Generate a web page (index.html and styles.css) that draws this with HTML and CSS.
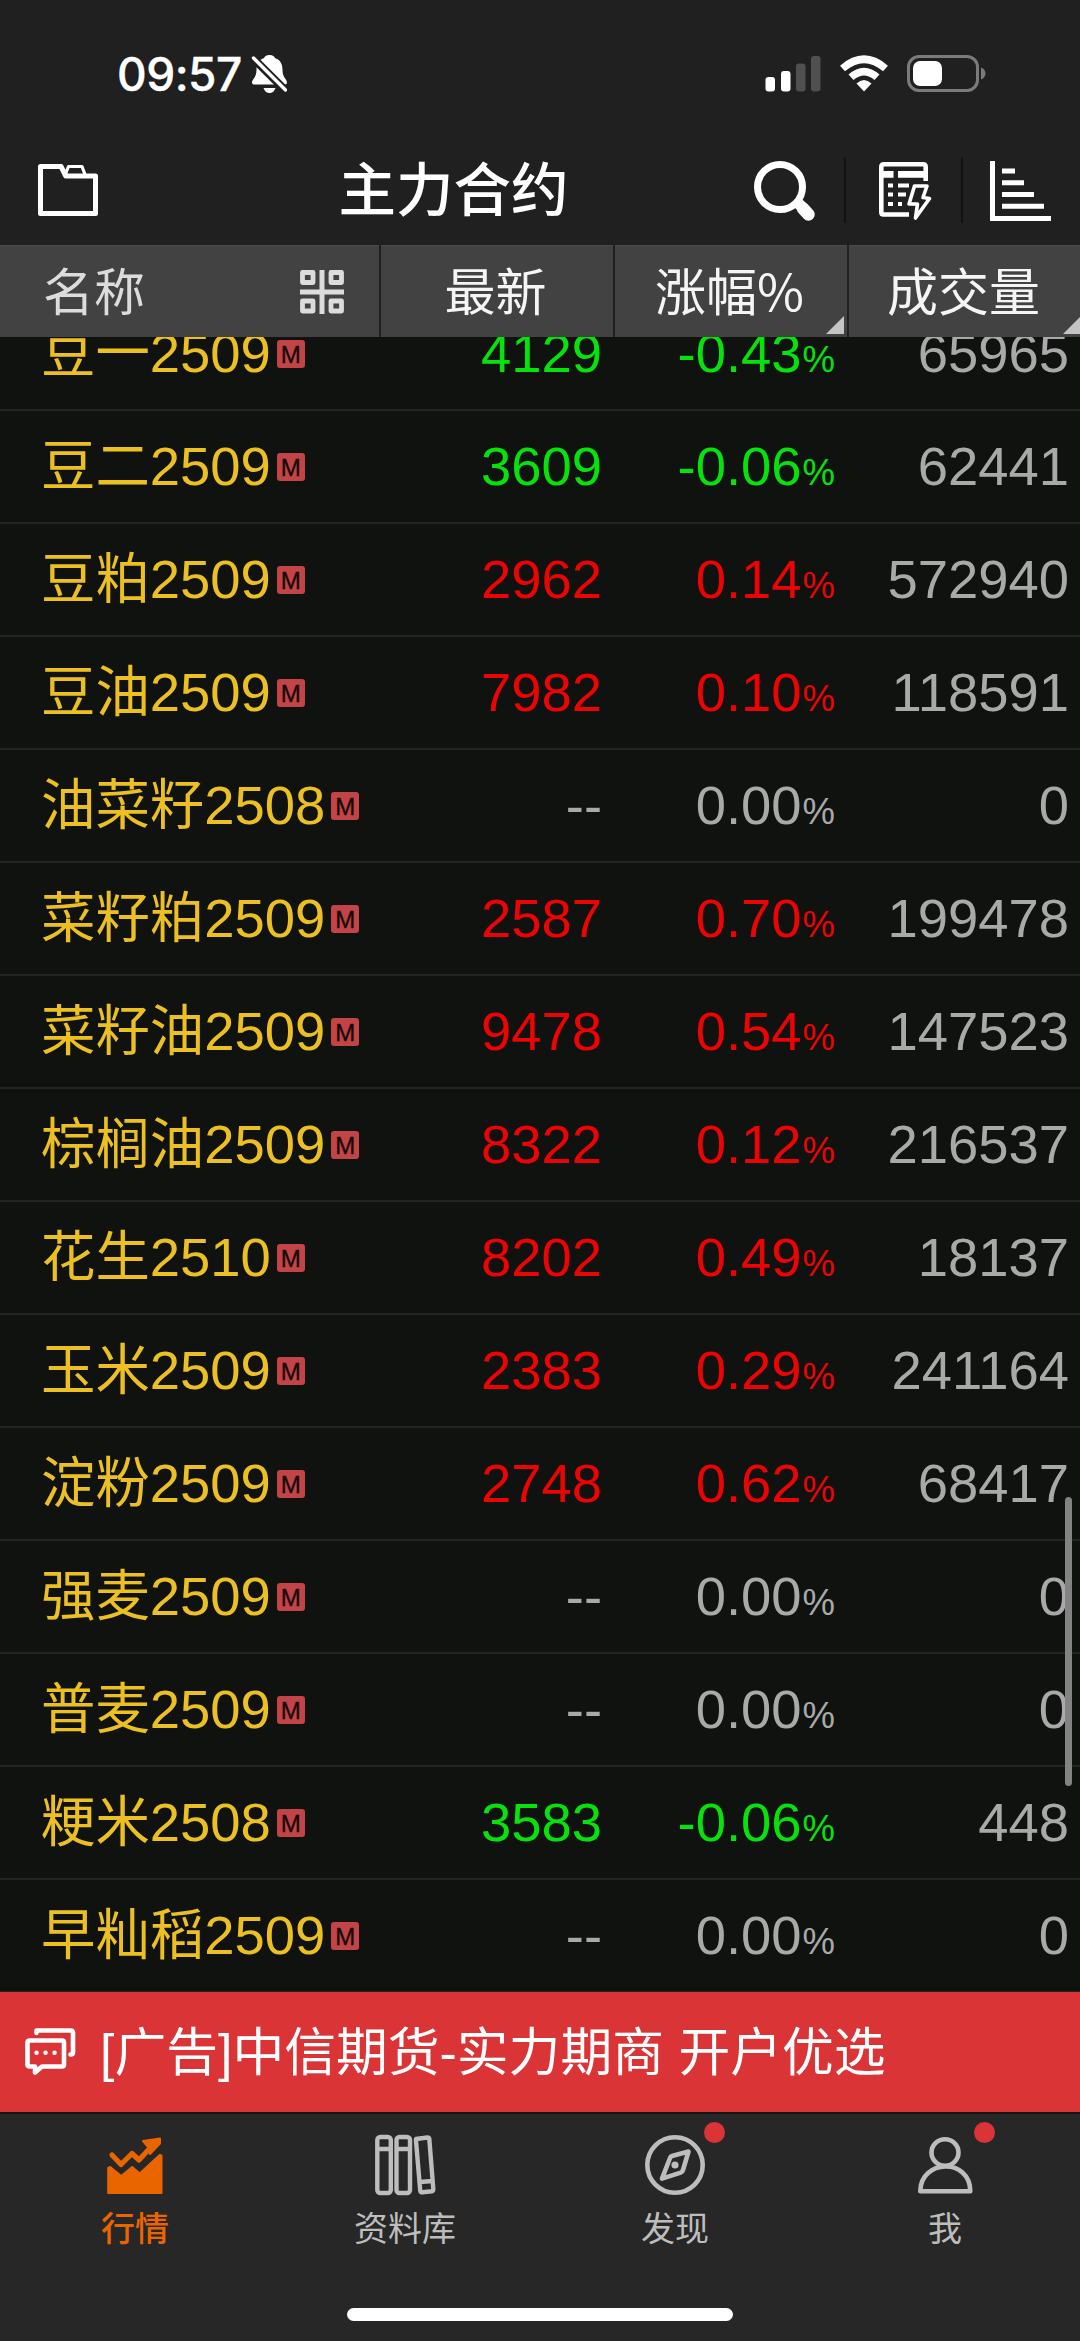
FILE: index.html
```html
<!DOCTYPE html>
<html lang="zh-CN">
<head>
<meta charset="UTF-8">
<title>主力合约</title>
<link rel="stylesheet" href="styles.css">
</head>
<body>
    <header>
        <div class="status">
            <span class="time">09:57</span>
            <svg class="bell" width="36" height="40" viewBox="251 54 36 40">
                <path fill="#fff" d="M269.500 55c3.500 0 5 1.500 5.500 3 6 2 7.500 7 7.500 12 0 8 4.500 9 4.500 12.500 0 1.500-1 2-2.500 2h-30c-1.500 0-2.500-.500-2.500-2 0-3.500 4.500-4.500 4.500-12.500 0-5 1.500-10 7.500-12 .500-1.500 2-3 5.500-3zM263.500 88h12c-1 3-3 5-6 5s-5-2-6-5z"/>
                <path stroke="#202020" stroke-width="8" d="M252 57l35 35"/>
                <path stroke="#fff" stroke-width="3.400" stroke-linecap="round" d="M253.500 58l32 32"/>
            </svg>
            <div class="status-right">
                <svg width="56" height="36" viewBox="766 55 56 36">
                    <g fill="#fff"><rect x="766.500" y="76" width="9.500" height="14.500" rx="3"/><rect x="782" y="70" width="9.500" height="20.500" rx="3"/></g>
                    <g fill="#505050"><rect x="797" y="62.500" width="9.500" height="28" rx="3"/><rect x="812" y="55" width="9.500" height="35.500" rx="3"/></g>
                </svg>
                <svg width="50" height="37" viewBox="839 54 50 37">
                    <path fill="none" stroke="#fff" stroke-width="7.500" d="M842.500 67.500q21.500-18.500 43 0M851 76.300q13-11.500 26 0"/>
                    <path fill="#fff" d="M864 90.500l-7.500-8q7.500-7 15 0z"/>
                </svg>
                <svg width="80" height="38" viewBox="907 54 80 38">
                    <rect x="908.500" y="55.500" width="69" height="34" rx="10.500" fill="none" stroke="#7b7b7b" stroke-width="3"/>
                    <rect x="913" y="60" width="29" height="25" rx="7" fill="#fff"/>
                    <path fill="#7b7b7b" d="M981 66.500c6 2 6 10 0 12z"/>
                </svg>
            </div>
        </div>
        <div class="titlebar">
            <svg class="folder" width="62" height="54" viewBox="37 163 62 54" fill="none" stroke="#fff" stroke-linejoin="round">
                <path stroke-width="5" d="M40.500 166.500h20.500l4.800 9.500h29.700v37.500h-55z"/>
                <path stroke-width="3.200" d="M65.500 174l3-7.500h13.500l3 8"/>
            </svg>
            <h1>主力合约</h1>
            <div class="tools">
                <svg width="64" height="64" viewBox="752 157 64 64" fill="none" stroke="#fff">
                    <circle cx="780" cy="186" r="22.500" stroke-width="7"/>
                    <path stroke-width="12.500" stroke-linecap="round" d="M803 207.500l5.500 6"/>
                    <path stroke-width="11" d="M797 201l8 8"/>
                </svg>
                <i class="sep"></i>
                <svg width="56" height="64" viewBox="876 157 56 64" fill="none" stroke="#fff">
                    <path stroke-width="4.600" stroke-linejoin="round" d="M908 213.500h-25.500q-2.200 0-2.200-2.200v-45.300q0-2.700 2.700-2.700h39q2.700 0 2.700 2.700v14"/>
                    <path stroke-width="6.600" d="M881 173.400h11.500M897 173.400h27"/>
                    <path stroke-width="4" d="M887 184.500h5M887 193.500h5M887 203h5M897 184.500h11M897 193.500h8M897 203h4"/>
                    <path stroke-width="3.600" stroke-linejoin="round" d="M913.500 185h12.500l-4 11.500 6.500 1-14 19.500 2-14h-8.500z"/>
                </svg>
                <i class="sep"></i>
                <svg class="chart" width="62" height="64" viewBox="990 157 62 64" fill="none" stroke="#fff" stroke-width="5">
                    <path d="M992.500 160v57.500h58.500"/>
                    <path d="M1002 170h13M1002 181.700h22M1002 193.500h32M1002 205.300h42"/>
                </svg>
            </div>
        </div>
    </header>

    <div class="thead">
        <div class="th th-name">
            <span>名称</span>
            <svg width="44" height="44" viewBox="0 0 44 44" fill="none" stroke="#dcdcdc" stroke-width="5">
                <path d="M22 0v44M0 22h44"/>
                <g stroke-width="4.800" stroke-linejoin="round"><path d="M2.500 2.500h10.500v10h-10.500zM31 2.500h10.500v10h-10.500zM2.500 31h10.500v10h-10.500zM31 31h10.500v10h-10.500z"/></g>
            </svg>
        </div>
        <div class="th"><span>最新</span></div>
        <div class="th sort"><span>涨幅%</span></div>
        <div class="th sort"><span>成交量</span></div>
    </div>

    <div class="list">
        <div class="row down"><span class="name">豆一2509<b>M</b></span><span>4129</span><span>-0.43<small>%</small></span><span class="vol">65965</span></div>
        <div class="row down"><span class="name">豆二2509<b>M</b></span><span>3609</span><span>-0.06<small>%</small></span><span class="vol">62441</span></div>
        <div class="row up"><span class="name">豆粕2509<b>M</b></span><span>2962</span><span>0.14<small>%</small></span><span class="vol">572940</span></div>
        <div class="row up"><span class="name">豆油2509<b>M</b></span><span>7982</span><span>0.10<small>%</small></span><span class="vol">118591</span></div>
        <div class="row"><span class="name">油菜籽2508<b>M</b></span><span>--</span><span>0.00<small>%</small></span><span class="vol">0</span></div>
        <div class="row up"><span class="name">菜籽粕2509<b>M</b></span><span>2587</span><span>0.70<small>%</small></span><span class="vol">199478</span></div>
        <div class="row up"><span class="name">菜籽油2509<b>M</b></span><span>9478</span><span>0.54<small>%</small></span><span class="vol">147523</span></div>
        <div class="row up"><span class="name">棕榈油2509<b>M</b></span><span>8322</span><span>0.12<small>%</small></span><span class="vol">216537</span></div>
        <div class="row up"><span class="name">花生2510<b>M</b></span><span>8202</span><span>0.49<small>%</small></span><span class="vol">18137</span></div>
        <div class="row up"><span class="name">玉米2509<b>M</b></span><span>2383</span><span>0.29<small>%</small></span><span class="vol">241164</span></div>
        <div class="row up"><span class="name">淀粉2509<b>M</b></span><span>2748</span><span>0.62<small>%</small></span><span class="vol">68417</span></div>
        <div class="row"><span class="name">强麦2509<b>M</b></span><span>--</span><span>0.00<small>%</small></span><span class="vol">0</span></div>
        <div class="row"><span class="name">普麦2509<b>M</b></span><span>--</span><span>0.00<small>%</small></span><span class="vol">0</span></div>
        <div class="row down"><span class="name">粳米2508<b>M</b></span><span>3583</span><span>-0.06<small>%</small></span><span class="vol">448</span></div>
        <div class="row"><span class="name">早籼稻2509<b>M</b></span><span>--</span><span>0.00<small>%</small></span><span class="vol">0</span></div>
        <div class="scrollbar"></div>
    </div>

    <div class="ad">
        <svg width="52" height="50" viewBox="25 2027 52 50" fill="none" stroke="#fff" stroke-width="4.600" stroke-linejoin="round">
            <path stroke-linecap="round" d="M36.500 2033v-2.500h34q2.500 0 2.500 2.500v19.500q0 2-2.500 2"/>
            <path d="M30 2040.500h32q2 0 2 2v22q0 2-2 2h-20l-7 6v-6h-5q-2.500 0-2.500-2v-22q0-2 2.500-2z"/>
            <path stroke-width="4.400" stroke-linecap="round" d="M36.500 2052.700h.1M45.500 2052.700h.1M54.500 2052.700h.1"/>
        </svg>
        <span>[广告]中信期货-实力期商 开户优选</span>
    </div>

    <nav>
        <a class="tab active">
            <svg width="62" height="62" viewBox="104 2134 62 62">
                <path fill="none" stroke="#e96500" stroke-width="5.200" stroke-linejoin="round" stroke-linecap="round" d="M112 2155l9 9.500 11-11 7 6.500 12-13"/>
                <path fill="#e96500" stroke="#e96500" stroke-width="2" stroke-linejoin="round" d="M143 2141l17-2.500v5l-10 10.500-2-7zM108.200 2168l2-1 11 9 11-9 7.500 6.500 20-18.500 1.800.500v37.500h-53.300z"/>
            </svg>
            <span>行情</span>
        </a>
        <a class="tab">
            <svg width="62" height="62" viewBox="374 2134 62 62" fill="none" stroke="#bdbdbd" stroke-width="4.400">
                <rect x="377.300" y="2137" width="13.500" height="56" rx="3"/>
                <rect x="396.500" y="2137" width="13.500" height="56" rx="3"/>
                <path d="M377 2149h14M396 2149h14"/>
                <path stroke-linejoin="round" d="M416 2139l11.500-1.500q1.500 0 1.800 1.500l4 50q0 2-1.500 2.300l-9.300 1q-2 0-2.300-2l-4.200-49.300q-.3-1.700 0-2zM420 2182l12.500-1"/>
            </svg>
            <span>资料库</span>
        </a>
        <a class="tab dot">
            <svg width="62" height="62" viewBox="644 2134 62 62" fill="none" stroke="#bdbdbd" stroke-width="4.600">
                <circle cx="675" cy="2165" r="27.700"/>
                <path stroke-linejoin="round" d="M670 2158q.5-1.500 2-2l16.500-4.500-5.500 18.500q-.6 2-2.300 2.600l-18.700 6z"/>
                <circle cx="675" cy="2165" r="3.600" fill="#bdbdbd" stroke="none"/>
            </svg>
            <span>发现</span>
        </a>
        <a class="tab dot">
            <svg width="62" height="62" viewBox="914 2134 62 62" fill="none" stroke="#bdbdbd" stroke-width="4.600" stroke-linejoin="round">
                <ellipse cx="945" cy="2152.500" rx="13.500" ry="13.300"/>
                <path d="M920.300 2191.300c0-32 49.800-34 50 0z"/>
            </svg>
            <span>我</span>
        </a>
        <div class="home"></div>
    </nav>
</body>
</html>
```
FILE: styles.css
```css
* {
    margin: 0;
    padding: 0;
    box-sizing: border-box;
}

body {
    width: 1080px;
    height: 2341px;
    display: flex;
    flex-direction: column;
    background: #0f120f;
    font-family: "Liberation Sans", "Noto Sans CJK SC", sans-serif;
    overflow: hidden;
}

svg {
    display: block;
    flex: none;
}

header {
    height: 245px;
    background: #202020;
}

.status {
    height: 147px;
    padding: 0 93px 0 117px;
    display: flex;
    align-items: center;
}

.time {
    width: 125px;
    font: 500 46px/60px Inter, sans-serif;
    letter-spacing: -0.5px;
    white-space: nowrap;
    color: #fff;
    -webkit-text-stroke: 0.4px #fff;
}

.bell {
    margin-left: 9px;
}

.status-right {
    margin-left: auto;
    display: flex;
    align-items: center;
    gap: 18px;
}

.titlebar {
    height: 86px;
    padding: 0 28px 0 37px;
    display: flex;
    align-items: center;
    justify-content: space-between;
}

h1 {
    font-size: 57.5px;
    font-weight: 500;
    line-height: 86px;
    color: #fff;
    margin-left: 56px;
    padding-top: 2px;
}

.tools {
    display: flex;
    align-items: center;
}

.sep {
    width: 2px;
    height: 66px;
    background: #121212;
    margin: 0 31px 0 28px;
}

.chart {
    margin-left: -4px;
}

.thead {
    height: 92px;
    display: grid;
    grid-template-columns: 379px 232px 232px 232px;
    gap: 2px;
    background: #202020;
    z-index: 1;
}

.th {
    position: relative;
    display: flex;
    align-items: center;
    justify-content: center;
    background: #424242;
    border-top: 1px solid #4a4a4a;
    font-family: "Noto Sans CJK SC", sans-serif;
    font-size: 51px;
    line-height: 60px;
    color: #f5f5f5;
}

.th span {
    padding: 0 3px 6px 0;
}

.th-name {
    justify-content: space-between;
    padding: 0 35px 0 43px;
    color: #dcdcdc;
}

.sort::after {
    content: "";
    position: absolute;
    right: 3px;
    bottom: 3px;
    border-left: 18px solid transparent;
    border-bottom: 18px solid #c4c4c4;
}

.sort:last-child::after {
    right: 0;
}

.list {
    position: relative;
    height: 1655px;
    display: flex;
    flex-direction: column;
    justify-content: flex-end;
    overflow: hidden;
}

.row {
    height: 113px;
    flex: none;
    display: grid;
    grid-template-columns: 380px 222px 233px 234px;
    align-items: center;
    position: relative;
    top: 1px;
    border-bottom: 2px solid #222622;
    font-size: 54.4px;
    line-height: 80px;
    text-align: right;
    color: #a9a9a9;
}

.up {
    color: #ea0404;
}

.down {
    color: #08e20c;
}

.row .vol {
    color: #a9a9a9;
}

.row > span {
    height: 80px;
}

.row small {
    font-size: 36.5px;
    line-height: 1;
    margin-left: 1px;
}

.name {
    padding-left: 41px;
    display: flex;
    align-items: center;
    color: #ecc022;
}

.name b {
    width: 28px;
    height: 28px;
    margin-left: 6px;
    border-radius: 3px;
    background: #c24446;
    font-size: 24px;
    font-weight: 400;
    line-height: 29px;
    text-align: center;
    color: #150808;
    -webkit-text-stroke: 0.3px #150808;
}

.scrollbar {
    position: absolute;
    right: 8px;
    top: 1160px;
    width: 7px;
    height: 289px;
    border-radius: 4px;
    background: #828382;
}

.ad {
    height: 120px;
    padding-left: 25px;
    display: flex;
    align-items: center;
    gap: 23px;
    background: #da3436;
    font-size: 51.8px;
    line-height: 60px;
    color: #fff;
    white-space: pre;
}

.ad span {
    padding-top: 1px;
}

nav {
    position: relative;
    height: 229px;
    display: flex;
    border-top: 2px solid #151515;
    background: #272727;
}

.tab {
    flex: 1;
    display: flex;
    flex-direction: column;
    align-items: center;
    padding-top: 20px;
    position: relative;
    font-size: 34px;
    line-height: 50px;
    color: #bdbdbd;
}

.tab span {
    margin-top: 8px;
}

.active {
    color: #e96500;
    font-weight: 500;
}

.dot::after {
    content: "";
    position: absolute;
    left: 164px;
    top: 8px;
    width: 21px;
    height: 21px;
    border-radius: 50%;
    background: #da3436;
}

.home {
    position: absolute;
    left: 347px;
    bottom: 20px;
    width: 386px;
    height: 13px;
    border-radius: 7px;
    background: #fff;
}
```
